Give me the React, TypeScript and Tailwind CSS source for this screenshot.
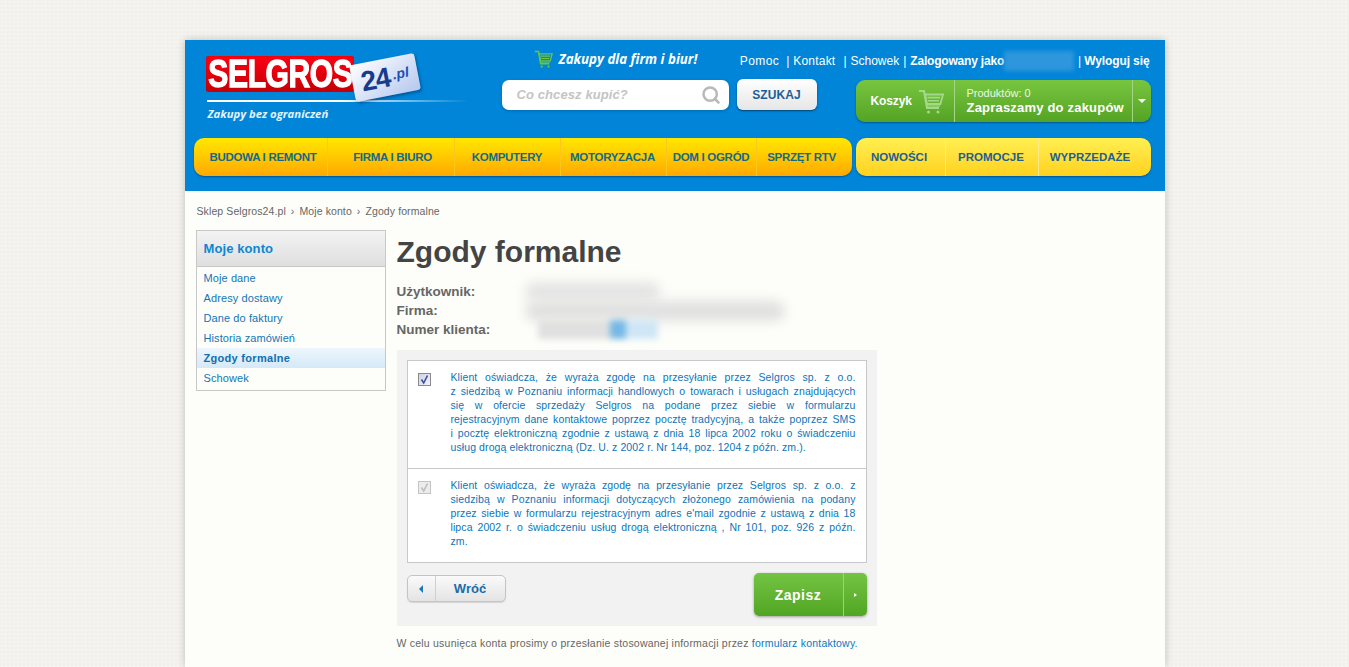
import { Search } from "lucide-react";

const leftNav = [
  { label: "BUDOWA I REMONT", cell: "w-[133px] pl-[6px]" },
  { label: "FIRMA I BIURO", cell: "w-[127px] pl-[4px]" },
  { label: "KOMPUTERY", cell: "w-[106px]" },
  { label: "MOTORYZACJA", cell: "w-[106px] pr-[1px]" },
  { label: "DOM I OGRÓD", cell: "w-[90px]" },
  { label: "SPRZĘT RTV", cell: "w-[96px] pr-[5px]" },
];

const rightNav = [
  { label: "NOWOŚCI", cell: "w-[89px] pr-[2px]" },
  { label: "PROMOCJE", cell: "w-[93px] pr-[1px]" },
  { label: "WYPRZEDAŻE", cell: "w-[113px] pr-[9px]" },
];

const menu = ["Moje dane", "Adresy dostawy", "Dane do faktury", "Historia zamówień", "Zgody formalne", "Schowek"];

const consentOne = [
  "Klient oświadcza, że wyraża zgodę na przesyłanie przez Selgros sp. z o.o.",
  "z siedzibą w Poznaniu informacji handlowych o towarach i usługach znajdujących",
  "się w ofercie sprzedaży Selgros na podane przez siebie w formularzu",
  "rejestracyjnym dane kontaktowe poprzez pocztę tradycyjną, a także poprzez SMS",
  "i pocztę elektroniczną zgodnie z ustawą z dnia 18 lipca 2002 roku o świadczeniu",
];

const consentTwo = [
  "Klient oświadcza, że wyraża zgodę na przesyłanie przez Selgros sp. z o.o. z",
  "siedzibą w Poznaniu informacji dotyczących złożonego zamówienia na podany",
  "przez siebie w formularzu rejestracyjnym adres e'mail zgodnie z ustawą z dnia 18",
  "lipca 2002 r. o świadczeniu usług drogą elektroniczną , Nr 101, poz. 926 z późn.",
];

const CartIcon = ({ className }: { className: string }) => (
  <svg viewBox="0 0 26 25" fill="none" className={className}>
    <path d="M1 2h5l3 17h12" stroke="currentColor" strokeWidth="2" />
    <path d="M7.2 5.5H25l-2.6 9.5H9z" stroke="currentColor" strokeWidth="1.8" />
    <path d="M9.5 8.6h12.5M10 11.8h11" stroke="currentColor" strokeWidth="1.6" />
    <path d="M9 17h13" stroke="currentColor" strokeWidth="1.2" />
    <circle cx="10.5" cy="23" r="1.5" fill="currentColor" />
    <circle cx="20" cy="23" r="1.5" fill="currentColor" />
  </svg>
);

const Logo = () => (
  <div className="flex w-[261px] flex-col pt-[16px]">
    <div className="relative h-[36px] w-[148px] rounded-[3px] bg-gradient-to-b from-[#ff0010] to-[#c40008] shadow-[inset_0_0_1px_#8a0006]">
      <span className="block origin-left scale-x-[0.79] pl-[3px] text-[38px] leading-[36px] font-bold tracking-[-0.5px] whitespace-nowrap text-white [-webkit-text-stroke:1.3px_white]">
        SELGROS
      </span>
      <div className="absolute top-[3px] left-[146px] flex h-[37px] w-[66px] -rotate-[11deg] items-center justify-center gap-[3px] rounded-[3px] bg-gradient-to-br from-[#ffffff] to-[#b6c8ee] shadow-[1px_2px_3px_rgba(0,40,90,0.5)]">
        <span className="text-[28px] leading-[20px] font-bold tracking-[-1px] text-[#173c8c]">24</span>
        <span className="mt-[-4px] text-[14px] leading-[10px] font-bold italic text-[#1c50b4]">.pl</span>
      </div>
    </div>
    <div className="mt-[8px] ml-[1px] h-[2px] w-[261px] bg-gradient-to-r from-white via-white to-transparent" />
    <p className="mt-[4px] ml-[2px] text-[11.3px] leading-[16px] font-bold italic text-[#e6f3fc] [font-family:'Open_Sans',sans-serif]">
      Zakupy bez ograniczeń
    </p>
  </div>
);

const TopBar = () => (
  <div className="flex h-[31px] items-start justify-between pt-[11px]">
    <div className="mt-[-1px] ml-[32px] flex items-center gap-[6px]">
      <CartIcon className="h-[18px] w-[19px] text-[#6cc644]" />
      <span className="text-[13.3px] leading-[18px] font-bold italic text-white [font-family:'Open_Sans',sans-serif]">
        Zakupy dla firm i biur!
      </span>
    </div>
    <div className="mr-[1px] flex items-center text-[12px] leading-[20px] whitespace-nowrap text-white">
      <span className="tracking-[0.4px]">Pomoc</span>
      <span className="ml-[7px]">|</span>
      <span className="ml-[4px] tracking-[0.2px]">Kontakt</span>
      <span className="ml-[8px]">|</span>
      <span className="ml-[4px]">Schowek</span>
      <span className="ml-[4px]">|</span>
      <span className="ml-[4px] font-bold tracking-[-0.2px]">Zalogowany jako</span>
      <span className="h-[20px] w-[70px] bg-[#2e96dc] blur-[2px]" />
      <span className="ml-[4px]">|</span>
      <span className="ml-[3px] font-bold tracking-[-0.1px]">Wyloguj się</span>
    </div>
  </div>
);

const SearchBar = () => (
  <div className="mt-[9px] flex items-start">
    <div className="flex h-[30px] w-[227px] items-center justify-between rounded-[7px] bg-white pr-[8px] pl-[15px] shadow-[0_1px_3px_rgba(0,50,100,0.35)]">
      <span className="text-[13px] font-bold italic tracking-[0.1px] text-[#c4c4c4]">Co chcesz kupić?</span>
      <Search className="h-[20px] w-[20px] text-[#b9b9b9]" strokeWidth={3} />
    </div>
    <div className="mt-[-1px] ml-[8px] flex h-[31px] w-[80px] items-center justify-center rounded-[6px] bg-gradient-to-b from-white to-[#e6e6e6] text-[12px] font-bold tracking-[0.1px] text-[#1b5f99] shadow-[0_1px_2px_rgba(0,0,0,0.5)]">
      SZUKAJ
    </div>
  </div>
);

const Basket = () => (
  <div className="flex h-[42px] w-[295px] rounded-[9px] bg-gradient-to-b from-[#78c63f] to-[#54a324] text-white shadow-[0_1px_2px_rgba(0,40,80,0.5)]">
    <div className="flex w-[99px] items-center border-r border-[#a4d684] pl-[15px]">
      <span className="text-[12px] font-bold tracking-[-0.1px]">Koszyk</span>
      <CartIcon className="ml-[6px] h-[25px] w-[26px] text-[#a5d98a]" />
    </div>
    <div className="flex w-[177px] flex-col justify-center pt-[1px] pl-[12px]">
      <span className="text-[11px] leading-[12px] text-[#ecf7e2]">Produktów: 0</span>
      <span className="text-[13px] leading-[18px] font-bold tracking-[0.2px] whitespace-nowrap">Zapraszamy do zakupów</span>
    </div>
    <div className="flex flex-1 items-center justify-center border-l border-[#a4d684]">
      <span className="h-0 w-0 border-x-[4px] border-t-[4px] border-x-transparent border-t-white" />
    </div>
  </div>
);

const Nav = () => (
  <nav className="mt-[16px] flex px-[9px]">
    <div className="flex h-[38px] w-[658px] overflow-hidden rounded-[10px] bg-gradient-to-b from-[#ffe800] to-[#ffa800] shadow-[0_1px_2px_rgba(0,40,80,0.5)]">
      {leftNav.map((item, i) => (
        <a
          key={item.label}
          className={`flex items-center justify-center pt-[1px] text-[11.5px] font-bold tracking-[-0.3px] whitespace-nowrap text-[#136a86] ${item.cell} ${i > 0 ? "border-l border-[#ffc71e]" : ""}`}
        >
          {item.label}
        </a>
      ))}
    </div>
    <div className="ml-[4px] flex h-[38px] w-[295px] overflow-hidden rounded-[10px] bg-gradient-to-b from-[#fff050] to-[#ffd11a] shadow-[0_1px_2px_rgba(0,40,80,0.5)]">
      {rightNav.map((item, i) => (
        <a
          key={item.label}
          className={`flex items-center justify-center pt-[1px] text-[11.5px] font-bold whitespace-nowrap text-[#1c6090] ${item.cell} ${i > 0 ? "border-l border-[#ffe98a]" : ""}`}
        >
          {item.label}
        </a>
      ))}
    </div>
  </nav>
);

const Sidebar = () => (
  <aside className="h-[161px] w-[190px] shrink-0 border border-[#c8c8c8] bg-[#fdfef9]">
    <div className="flex h-[36px] items-center border-b border-[#c8c8c8] bg-gradient-to-b from-[#f3f3f3] to-[#dfdfdf] pl-[7px] text-[13px] font-bold tracking-[0.1px] text-[#0d87d2]">
      Moje konto
    </div>
    <ul className="pt-[1px]">
      {menu.map((item) => (
        <li
          key={item}
          className={
            item === "Zgody formalne"
              ? "flex h-[20px] items-center bg-gradient-to-b from-[#edf6fc] to-[#d5e9f8] pl-[7px] text-[11px] font-bold tracking-[0.3px] text-[#0f6fb0]"
              : "flex h-[20px] items-center pl-[7px] text-[11px] tracking-[0.1px] text-[#1275b8]"
          }
        >
          {item}
        </li>
      ))}
    </ul>
  </aside>
);

const ConsentLines = ({ lines, last }: { lines: string[]; last: string }) => (
  <div className="w-[405px] text-[10.5px] leading-[14px] tracking-[0.1px] text-[#0b75b9]">
    {lines.map((line) => (
      <p key={line} className="text-justify [text-align-last:justify]">
        {line}
      </p>
    ))}
    <p>{last}</p>
  </div>
);

const Checkbox = ({ disabled }: { disabled?: boolean }) => (
  <span
    className={`mt-[3px] flex h-[13px] w-[13px] items-center justify-center border ${
      disabled ? "border-[#c4c4c4] bg-[#ececec]" : "border-[#8a8a8a] bg-gradient-to-br from-[#cfd3e6] to-[#f2f2f8]"
    }`}
  >
    <svg viewBox="0 0 11 11" className="h-[11px] w-[11px]" fill="none">
      <path d="M2.5 5.5 4.7 9 8.5 1.5" stroke={disabled ? "#bdbdbd" : "#3c4fa0"} strokeWidth="1.6" />
    </svg>
  </span>
);

const Consents = () => (
  <div className="h-[203px] border border-[#c8c8c8] bg-white">
    <div className="flex h-[108px] border-b border-[#c8c8c8] pt-[9px] pl-[10px]">
      <Checkbox />
      <div className="ml-[20px]">
        <ConsentLines lines={consentOne} last="usług drogą elektroniczną (Dz. U. z 2002 r. Nr 144, poz. 1204 z późn. zm.)." />
      </div>
    </div>
    <div className="flex pt-[9px] pl-[10px]">
      <Checkbox disabled />
      <div className="ml-[20px]">
        <ConsentLines lines={consentTwo} last="zm." />
      </div>
    </div>
  </div>
);

const Buttons = () => (
  <div className="mt-[10px] flex items-start justify-between">
    <div className="mt-[2px] flex h-[27px] w-[99px] rounded-[5px] border border-[#c4c4c4] bg-gradient-to-b from-[#fafafa] to-[#e4e4e4] shadow-[0_1px_1px_rgba(0,0,0,0.12)]">
      <div className="flex w-[28px] items-center justify-center border-r border-[#d0d0d0]">
        <span className="h-0 w-0 border-y-[4px] border-r-[4px] border-y-transparent border-r-[#1a78bd]" />
      </div>
      <span className="flex flex-1 items-center justify-center text-[13px] font-bold text-[#1a6cab]">Wróć</span>
    </div>
    <div className="flex h-[43px] w-[113px] rounded-[5px] bg-gradient-to-b from-[#74c443] to-[#52a523] text-white shadow-[0_1px_3px_rgba(0,0,0,0.35)]">
      <span className="flex w-[90px] items-center justify-center border-r border-[#9dd27a] pt-[2px] text-[14px] font-bold tracking-[0.5px]">Zapisz</span>
      <span className="flex flex-1 items-center justify-center">
        <span className="h-0 w-0 border-y-[2.5px] border-l-[3px] border-y-transparent border-l-white" />
      </span>
    </div>
  </div>
);

const Main = () => (
  <section className="mt-[1px] ml-[11px] w-[480px]">
    <h1 className="text-[30px] leading-[42px] font-bold text-[#444444]">Zgody formalne</h1>
    <div className="mt-[9px] text-[13.5px] leading-[19px] font-bold text-[#666666]">
      <div className="flex h-[19px] items-center">
        <span className="w-[128px]">Użytkownik:</span>
        <span className="h-[19px] w-[135px] rounded-full bg-[#e4e4e4] blur-[6px]" />
      </div>
      <div className="flex h-[19px] items-center">
        <span className="w-[128px]">Firma:</span>
        <span className="h-[20px] w-[260px] rounded-full bg-[#e0e0e0] blur-[6px]" />
      </div>
      <div className="flex h-[19px] items-center">
        <span className="w-[141px]">Numer klienta:</span>
        <span className="flex h-[19px] w-[120px] overflow-hidden blur-[3px]">
          <span className="w-[72px] bg-[#e0e0e0]" />
          <span className="w-[16px] bg-[#74b8e6]" />
          <span className="w-[32px] bg-[#cfe6f6]" />
        </span>
      </div>
    </div>
    <div className="mt-[11px] h-[276px] bg-[#f2f2f2] p-[10px]">
      <Consents />
      <Buttons />
    </div>
    <p className="mt-[10px] text-[10.5px] leading-[14px] tracking-[0.22px] text-[#666666]">
      W celu usunięca konta prosimy o przesłanie stosowanej informacji przez{" "}
      <span className="text-[#0a78c2]">formularz kontaktowy.</span>
    </p>
  </section>
);

export default function App() {
  return (
    <div className="flex h-[667px] justify-center overflow-hidden bg-[#f3f1ec] bg-[radial-gradient(#f9f8f4_0.6px,transparent_1px),radial-gradient(#edebe5_0.6px,transparent_1px)] bg-[length:4px_4px,5px_5px] pt-[40px] [font-family:'Liberation_Sans',Arial,sans-serif]">
      <div className="h-[627px] w-[980px] bg-[#fdfef9] shadow-[0_0_8px_rgba(0,0,0,0.22)]">
        <header className="h-[151px] bg-[#0085d9]">
          <div className="flex h-[82px] pr-[14px]">
            <div className="w-[317px] pl-[21px]">
              <Logo />
            </div>
            <div className="flex-1">
              <TopBar />
              <div className="flex justify-between">
                <SearchBar />
                <div className="mt-[9px]">
                  <Basket />
                </div>
              </div>
            </div>
          </div>
          <Nav />
        </header>
        <div className="px-[11px] pt-[13px]">
          <div className="flex items-center pl-[1px] text-[10.5px] leading-[14px] tracking-[0.1px] text-[#666666]">
            <span>Sklep Selgros24.pl</span>
            <span className="mx-[5px]">›</span>
            <span>Moje konto</span>
            <span className="mx-[5px]">›</span>
            <span>Zgody formalne</span>
          </div>
          <div className="mt-[12px] flex">
            <Sidebar />
            <Main />
          </div>
        </div>
      </div>
    </div>
  );
}
